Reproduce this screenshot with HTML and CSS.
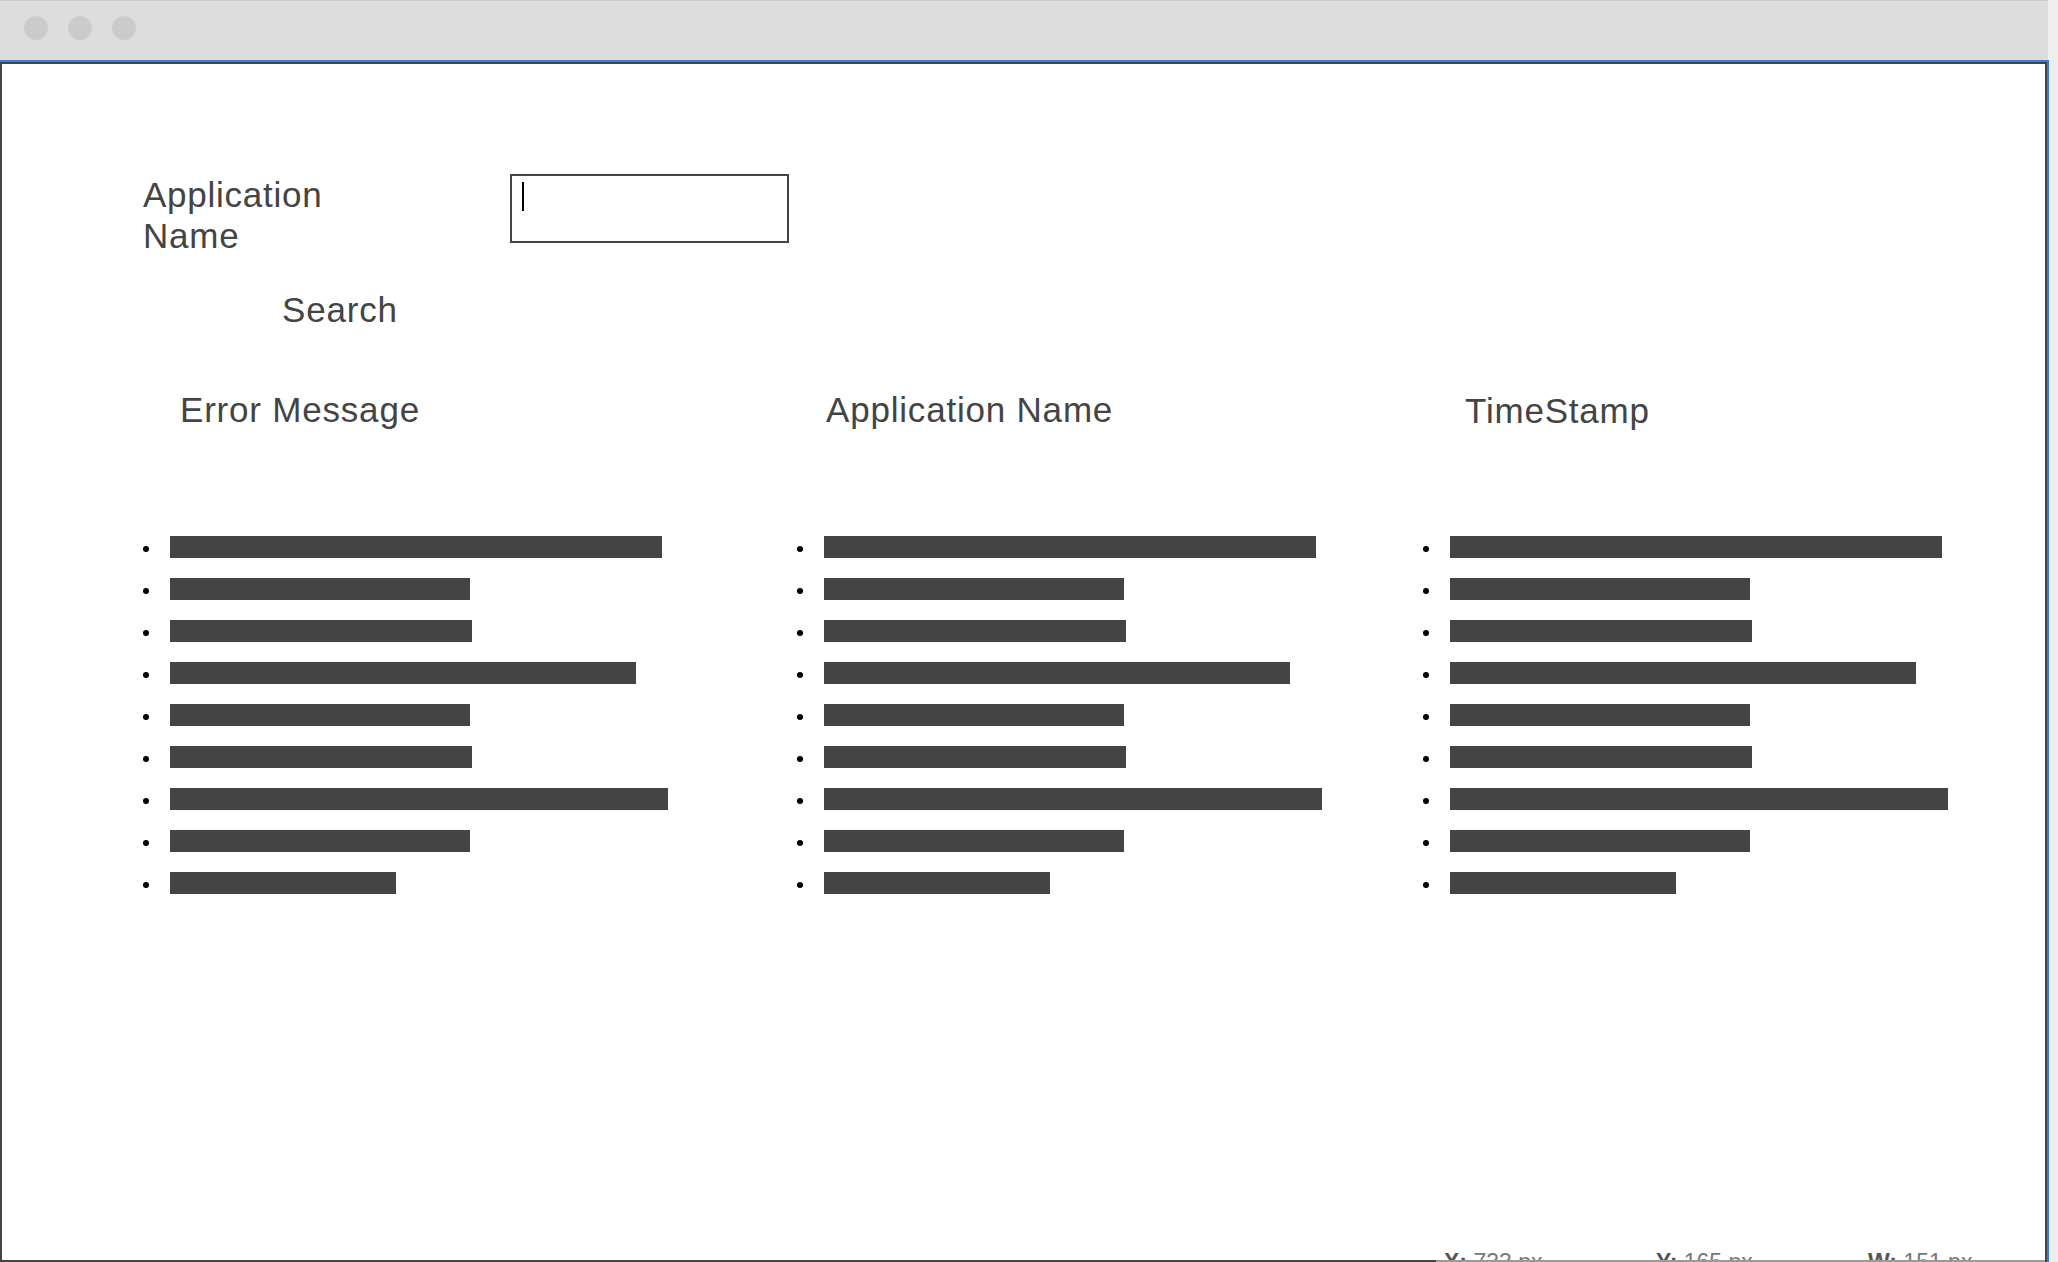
FILE: index.html
```html
<!DOCTYPE html>
<html lang="en">
<head>
<meta charset="utf-8">
<title>Error Log Search</title>
<link rel="stylesheet" href="styles.css">
</head>
<body>
<div class="window">
  <div class="titlebar">
    <span class="dot"></span>
    <span class="dot"></span>
    <span class="dot"></span>
  </div>
  <div class="frame">
    <div class="page">
      <div class="search-form">
        <div class="field-row">
          <label class="field-label">Application Name</label>
          <div class="textbox"><span class="caret"></span></div>
        </div>
        <div class="search-btn">Search</div>
      </div>
      <div class="results">
        <div class="column">
          <div class="col-head head-error">Error Message</div>
          <ul class="bars">
            <li><span class="bar" style="width:492px"></span></li>
            <li><span class="bar" style="width:300px"></span></li>
            <li><span class="bar" style="width:302px"></span></li>
            <li><span class="bar" style="width:466px"></span></li>
            <li><span class="bar" style="width:300px"></span></li>
            <li><span class="bar" style="width:302px"></span></li>
            <li><span class="bar" style="width:498px"></span></li>
            <li><span class="bar" style="width:300px"></span></li>
            <li><span class="bar" style="width:226px"></span></li>
          </ul>
        </div>
        <div class="column">
          <div class="col-head head-app">Application Name</div>
          <ul class="bars">
            <li><span class="bar" style="width:492px"></span></li>
            <li><span class="bar" style="width:300px"></span></li>
            <li><span class="bar" style="width:302px"></span></li>
            <li><span class="bar" style="width:466px"></span></li>
            <li><span class="bar" style="width:300px"></span></li>
            <li><span class="bar" style="width:302px"></span></li>
            <li><span class="bar" style="width:498px"></span></li>
            <li><span class="bar" style="width:300px"></span></li>
            <li><span class="bar" style="width:226px"></span></li>
          </ul>
        </div>
        <div class="column">
          <div class="col-head head-time">TimeStamp</div>
          <ul class="bars">
            <li><span class="bar" style="width:492px"></span></li>
            <li><span class="bar" style="width:300px"></span></li>
            <li><span class="bar" style="width:302px"></span></li>
            <li><span class="bar" style="width:466px"></span></li>
            <li><span class="bar" style="width:300px"></span></li>
            <li><span class="bar" style="width:302px"></span></li>
            <li><span class="bar" style="width:498px"></span></li>
            <li><span class="bar" style="width:300px"></span></li>
            <li><span class="bar" style="width:226px"></span></li>
          </ul>
        </div>
      </div>
    </div>
  </div>
  <div class="coords">
    <span class="coord"><b>X:</b> 733 px</span>
    <span class="coord"><b>Y:</b> 165 px</span>
    <span class="coord"><b>W:</b> 151 px</span>
  </div>
</div>
</body>
</html>
```
FILE: styles.css
```css
html, body {
  margin: 0;
  padding: 0;
}

body {
  width: 2058px;
  height: 1262px;
  overflow: hidden;
  background: #eeeeee;
  font-family: "Liberation Sans", Arial, sans-serif;
  color: #444444;
}

.window {
  position: relative;
  width: 2049px;
  height: 1262px;
  display: flex;
  flex-direction: column;
}

.titlebar {
  width: 2048px;
  height: 60px;
  box-sizing: border-box;
  background: #dddddd;
  border-top: 1px solid #cfcfcf;
  padding: 15px 0 0 24px;
  display: flex;
  align-items: flex-start;
  gap: 20px;
}

.dot {
  width: 24px;
  height: 24px;
  border-radius: 50%;
  background: #cbcbcb;
}

.frame {
  flex: 1;
  border-top: 2px solid #3e7bde;
  border-right: 2px solid #3e7bde;
  display: flex;
  flex-direction: column;
}

.page {
  flex: 1;
  box-sizing: border-box;
  background: #ffffff;
  border: 2px solid #444444;
  padding: 110px 0 0 141px;
}

.search-form {
  display: flex;
  flex-direction: column;
}

.field-row {
  display: flex;
  align-items: flex-start;
  gap: 147px;
}

.field-label {
  width: 220px;
  font-size: 35px;
  line-height: 41px;
  letter-spacing: 0.75px;
}

.textbox {
  width: 279px;
  height: 69px;
  box-sizing: border-box;
  border: 2px solid #444444;
  padding: 6px 0 0 10px;
}

.caret {
  display: block;
  width: 2px;
  height: 29px;
  background: #000000;
}

.search-btn {
  margin-top: 33px;
  padding-left: 139px;
  font-size: 35px;
  line-height: 41px;
  letter-spacing: 0.8px;
}

.results {
  margin-top: 59px;
  display: grid;
  grid-template-columns: 654px 626px 1fr;
}

.col-head {
  font-size: 35px;
  line-height: 41px;
  letter-spacing: 0.8px;
}

.head-error {
  padding-left: 37px;
}

.head-app {
  padding-left: 29px;
}

.head-time {
  padding-left: 42px;
  padding-top: 1px;
  margin-bottom: -1px;
}

.bars {
  margin: 96px 0 0;
  padding: 0;
  list-style: none;
}

.bars li {
  height: 42px;
  display: flex;
  align-items: center;
}

.bars li::before {
  content: "";
  width: 6px;
  height: 6px;
  margin-top: 4px;
  margin-right: 21px;
  border-radius: 50%;
  background: #000000;
  flex: none;
}

.bar {
  display: block;
  height: 22px;
  background: #444444;
}

.coords {
  position: absolute;
  left: 1436px;
  top: 1249px;
  width: 609px;
  height: 13px;
  box-sizing: border-box;
  overflow: hidden;
  border-bottom: 2px solid #9a9a9a;
  padding-left: 8px;
  display: flex;
  font-size: 23px;
  line-height: 26px;
  color: #777777;
}

.coord {
  width: 212px;
  flex: none;
}

.coord b {
  color: #555555;
}
```
